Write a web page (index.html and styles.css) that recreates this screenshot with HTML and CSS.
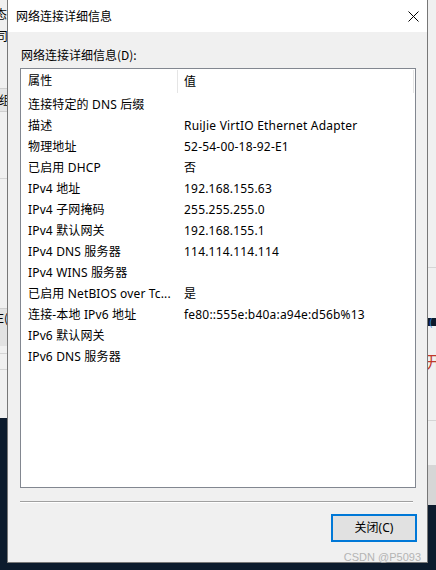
FILE: index.html
```html
<!DOCTYPE html>
<html lang="zh-CN">
<head>
<meta charset="utf-8">
<title>网络连接详细信息</title>
<link rel="stylesheet" href="styles.css">
</head>
<body>
<div class="desktop">
  <div class="bgwin bgwin-left">
    <div class="bl-t1">状态</div>
    <div class="bl-t2">公司</div>
    <div class="bl-band1">组</div>
    <div class="bl-line1"></div>
    <div class="bl-band2">属性E(</div>
    <div class="bl-line2"></div>
    <div class="bl-line3"></div>
  </div>
  <div class="bgwin bgwin-right">
    <div class="br-line1"></div>
    <div class="br-dark">(</div>
    <div class="br-glyph">开</div>
    <div class="br-line2"></div>
    <div class="br-band"></div>
  </div>

  <div class="dialog">
    <div class="titlebar">
      <span class="title">网络连接详细信息</span>
      <span class="close">
        <svg width="11" height="11" viewBox="0 0 11 11"><path d="M0.5 0.5 L10.5 10.5 M10.5 0.5 L0.5 10.5" stroke="#000" stroke-width="1" fill="none"/></svg>
      </span>
    </div>
    <div class="content">
      <div class="label">网络连接详细信息(D):</div>
      <div class="listbox">
        <div class="lv-header">
          <div class="c1">属性</div>
          <div class="c2">值</div>
        </div>
        <div class="row"><div class="c1">连接特定的 DNS 后缀</div><div class="c2"></div></div>
        <div class="row"><div class="c1">描述</div><div class="c2">RuiJie VirtIO Ethernet Adapter</div></div>
        <div class="row"><div class="c1">物理地址</div><div class="c2">52-54-00-18-92-E1</div></div>
        <div class="row"><div class="c1">已启用 DHCP</div><div class="c2">否</div></div>
        <div class="row"><div class="c1">IPv4 地址</div><div class="c2">192.168.155.63</div></div>
        <div class="row"><div class="c1">IPv4 子网掩码</div><div class="c2">255.255.255.0</div></div>
        <div class="row"><div class="c1">IPv4 默认网关</div><div class="c2">192.168.155.1</div></div>
        <div class="row"><div class="c1">IPv4 DNS 服务器</div><div class="c2">114.114.114.114</div></div>
        <div class="row"><div class="c1">IPv4 WINS 服务器</div><div class="c2"></div></div>
        <div class="row"><div class="c1">已启用 NetBIOS over Tc...</div><div class="c2">是</div></div>
        <div class="row"><div class="c1">连接-本地 IPv6 地址</div><div class="c2">fe80::555e:b40a:a94e:d56b%13</div></div>
        <div class="row"><div class="c1">IPv6 默认网关</div><div class="c2"></div></div>
        <div class="row"><div class="c1">IPv6 DNS 服务器</div><div class="c2"></div></div>
      </div>
      <div class="sep"></div>
      <div class="footer">
        <button class="btn">关闭(C)</button>
      </div>
    </div>
    <div class="watermark">CSDN @P5093</div>
  </div>
</div>
</body>
</html>
```

FILE: styles.css
```css
* { box-sizing: border-box; }
html, body { margin: 0; padding: 0; }
body {
  width: 436px;
  height: 570px;
  overflow: hidden;
  font-family: "Noto Sans", "Noto Sans CJK SC", sans-serif;
  font-size: 12px;
  color: #000;
}
.desktop {
  position: relative;
  width: 436px;
  height: 570px;
  background: #0c1b2d;
  overflow: hidden;
}

/* background windows on the desktop */
.bgwin {
  position: absolute;
  background: #f0f0f0;
  overflow: hidden;
  font-family: "Noto Sans CJK SC", sans-serif;
  font-size: 12px;
  white-space: nowrap;
}
.bgwin-left {
  left: -60px;
  top: 0;
  width: 68px;
  height: 418px;
  display: flex;
  flex-direction: column;
  text-align: right;
}
.bl-t1 { height: 17px; line-height: 16px; margin-top: 6px; padding-right: 1px; }
.bl-t2 { height: 20px; line-height: 22px; margin-top: 2px; }
.bl-band1 {
  margin-top: 43px;
  height: 24px;
  line-height: 22px;
  background: #e5e5e5;
  border-top: 1px solid #cfcfcf;
  border-bottom: 1px solid #cfcfcf;
  text-align: left;
  padding-left: 59px;
}
.bl-line1 { margin-top: 66px; height: 1px; background: #d5d5d5; }
.bl-band2 {
  margin-top: 129px;
  height: 38px;
  line-height: 18px;
  background: #e2e2e2;
  border-top: 1px solid #cfcfcf;
}
.bl-line2 { margin-top: 7px; height: 1px; background: #d5d5d5; }
.bl-line3 { margin-top: 15px; height: 1px; background: #d5d5d5; }

.bgwin-right {
  left: 428px;
  top: 0;
  width: 40px;
  height: 505px;
  display: flex;
  flex-direction: column;
}
.br-line1 { margin-top: 267px; height: 1px; background: #d5d5d5; }
.br-dark {
  margin-top: 50px;
  height: 8px;
  background: #0c1b2d;
  color: #3a8ee6;
  font-size: 10px;
  line-height: 8px;
  padding-left: 1px;
}
.br-glyph {
  margin-top: 26px;
  height: 18px;
  line-height: 18px;
  color: #c0392b;
  font-size: 16px;
  margin-left: -2px;
}
.br-line2 { margin-top: 50px; height: 1px; background: #d5d5d5; }
.br-band { margin-top: 44px; flex: 1; background: #d6d6d6; }

/* dialog */
.dialog {
  position: absolute;
  left: 7px;
  top: -1px;
  width: 421px;
  height: 564px;
  background: #f0f0f0;
  border: 1px solid #777;
  display: flex;
  flex-direction: column;
  font-family: "Noto Sans", "Noto Sans CJK SC", sans-serif;
}
.titlebar {
  height: 32px;
  flex: none;
  background: #fff;
  display: flex;
  align-items: center;
  padding-left: 8px;
}
.title {
  flex: 1;
  font-family: "Noto Sans CJK SC", sans-serif;
  font-size: 12px;
  line-height: 16px;
}
.close {
  width: 30px;
  height: 31px;
  display: flex;
  align-items: center;
  justify-content: center;
  margin-right: -1px;
}
.close svg { display: block; }

.content {
  flex: 1;
  display: flex;
  flex-direction: column;
  padding: 15px 11px 0 12px;
}
.label {
  font-family: "Noto Sans CJK SC", sans-serif;
  line-height: 16px;
  height: 16px;
  padding-left: 1px;
}
.listbox {
  margin-top: 5px;
  height: 420px;
  background: #fff;
  border: 1px solid #828790;
  flex: none;
}
.lv-header {
  height: 25px;
  display: flex;
  align-items: center;
  position: relative;
}
.lv-header .c1 {
  border-right: 1px solid #e5e5e5;
  height: 23px;
}
.lv-header::after {
  content: "";
  position: absolute;
  right: 1px;
  top: 1px;
  height: 23px;
  width: 1px;
  background: #e5e5e5;
}
.c1 {
  width: 157px;
  padding-left: 7px;
  white-space: nowrap;
  overflow: hidden;
  line-height: 22px;
  flex: none;
  letter-spacing: 0.15px;
}
.c2 {
  padding-left: 6px;
  white-space: nowrap;
  line-height: 22px;
  letter-spacing: 0.2px;
}
.row {
  height: 21px;
  display: flex;
  align-items: center;
}
.sep {
  margin-top: 13px;
  height: 2px;
  border-top: 1px solid #a0a0a0;
  border-bottom: 1px solid #fff;
  margin-right: 3px;
}
.footer {
  display: flex;
  justify-content: flex-end;
  margin-top: 11px;
}
.btn {
  width: 86px;
  height: 28px;
  margin-right: -1px;
  background: #e1e1e1;
  border: 2px solid #0078d7;
  font-family: "Noto Sans", "Noto Sans CJK SC", sans-serif;
  font-size: 12px;
  color: #000;
  padding: 0;
  line-height: 22px;
}
.watermark {
  position: absolute;
  right: 6px;
  bottom: -1px;
  font-family: "Liberation Sans", Arial, sans-serif;
  font-size: 11px;
  color: #b4b4b4;
}
```
